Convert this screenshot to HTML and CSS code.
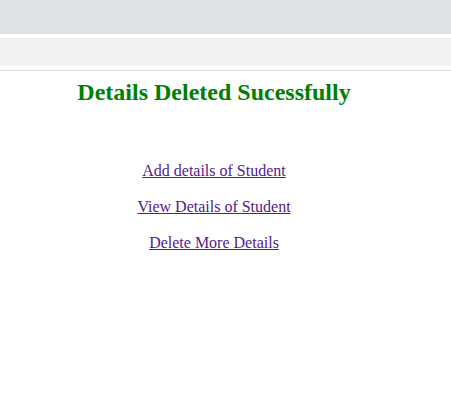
FILE: index.html
```html
<!DOCTYPE html>
<html>
<head>
<meta charset="utf-8">
<link rel="stylesheet" href="styles.css">
</head>
<body>
<div class="topbar"></div>
<div class="subbar"></div>
<div class="rule"></div>
<main class="content">
  <h2 class="title">Details Deleted Sucessfully</h2>
  <nav class="links">
    <a class="link" href="#add">Add details of Student</a>
    <a class="link" href="#view">View Details of Student</a>
    <a class="link" href="#delete">Delete More Details</a>
  </nav>
</main>
</body>
</html>
```
FILE: styles.css
```css
html, body {
  margin: 0;
  padding: 0;
  background: #ffffff;
}
body {
  font-family: "Liberation Serif", "Times New Roman", serif;
  width: 451px;
  height: 410px;
  overflow: hidden;
}
.topbar {
  height: 34px;
  background: #dee1e6;
}
.subbar {
  margin-top: 4px;
  height: 28px;
  background: #f1f2f4;
}
.rule {
  margin-top: 4px;
  height: 1px;
  background: #d9d9d9;
}
.content {
  width: 412px;
  margin-left: 8px;
  text-align: center;
}
.title {
  margin: 7px 0 0 0;
  font-size: 24px;
  font-weight: bold;
  color: #008000;
  line-height: 28px;
}
.links {
  display: flex;
  flex-direction: column;
  align-items: center;
  gap: 18px;
  margin-top: 56px;
}
.link {
  font-size: 16px;
  line-height: 18px;
  color: #551a8b;
  text-decoration: underline;
}
```
